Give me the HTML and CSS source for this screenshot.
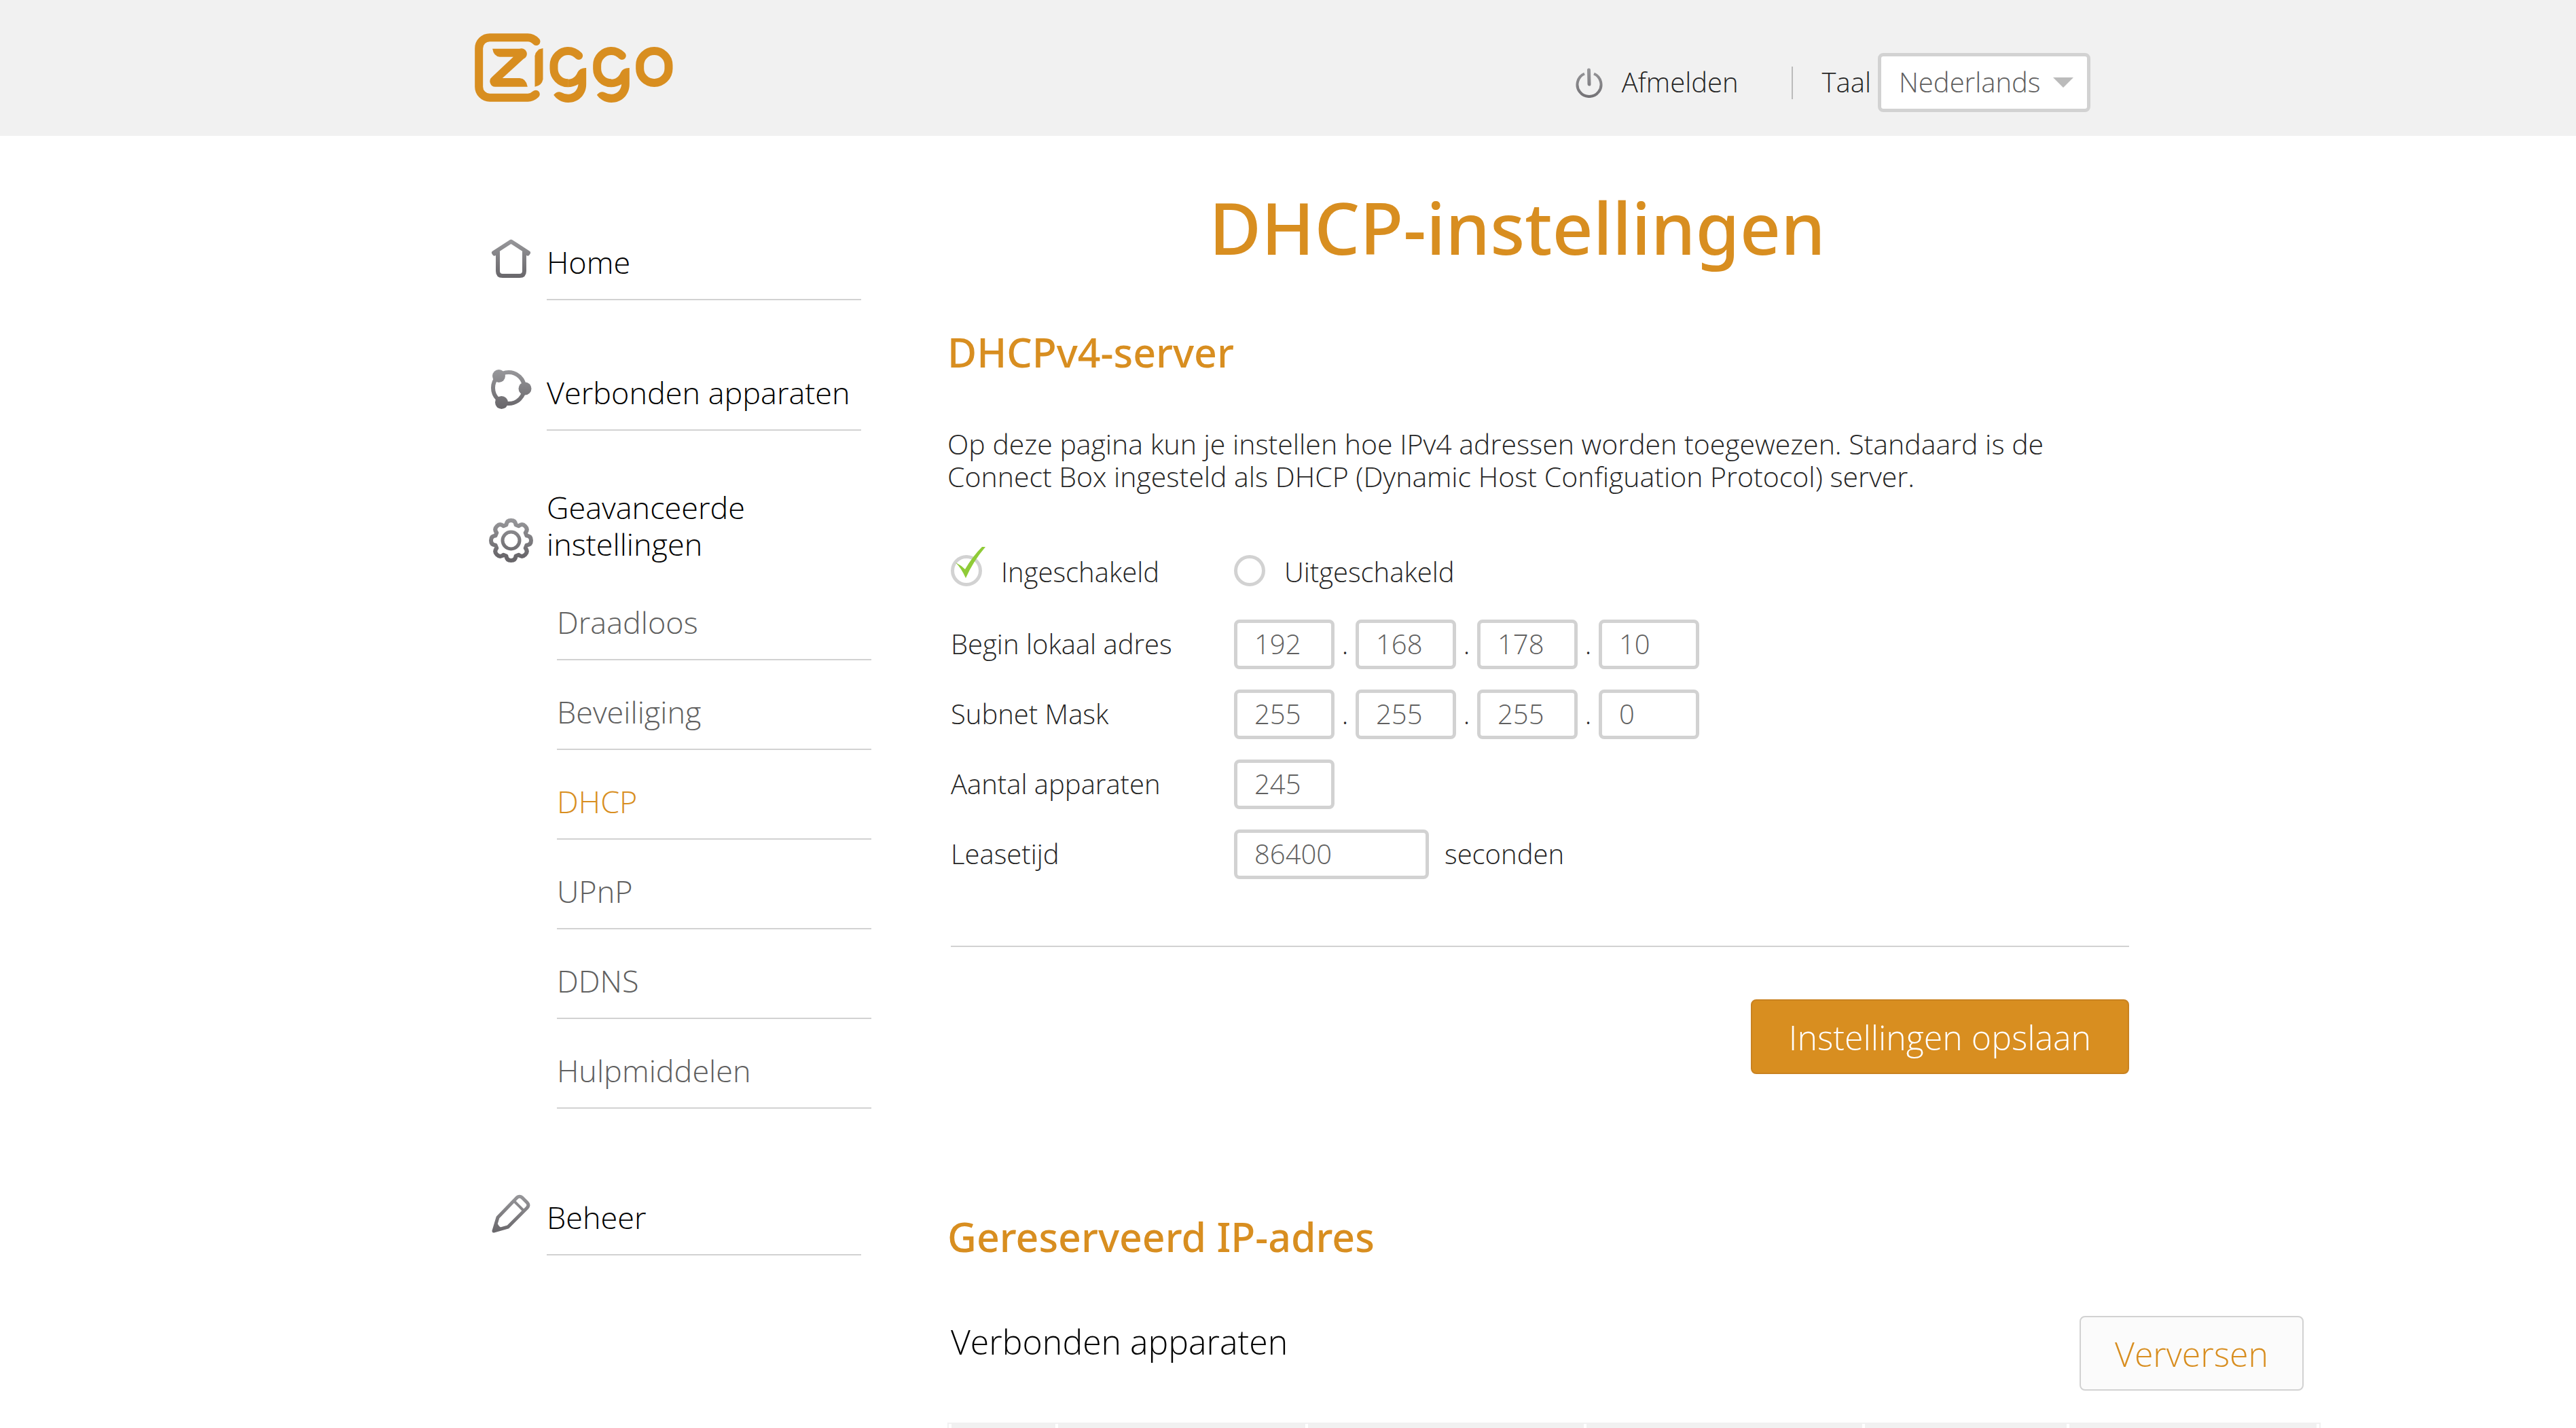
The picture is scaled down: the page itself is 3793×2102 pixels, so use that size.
FILE: index.html
```html
<!DOCTYPE html>
<html lang="nl">
<head>
<meta charset="utf-8">
<meta name="viewport" content="width=device-width, initial-scale=1">
<title>DHCP-instellingen</title>
<link rel="stylesheet" href="styles.css">
</head>
<body>
<header class="header">
  <a class="logo" href="#" aria-label="Ziggo">
    <svg width="292" height="102" viewBox="118 147 875 306" fill="none">
      <g stroke="currentColor" stroke-width="36" stroke-linecap="round">
        <path d="M389 183Q373 165.500 352 165.500H184A48 48 0 0 0 136 213.500V383A48 48 0 0 0 184 431H352Q371 431 387 416"/>
        <path stroke-linecap="butt" d="M530 367A63 63 0 0 1 467 304V288A63 63 0 0 1 530 225"/>
        <path d="M530 225Q556 225 577 246"/>
        <path stroke-linecap="butt" d="M721 367A63 63 0 0 1 658 304V288A63 63 0 0 1 721 225"/>
        <path d="M721 225Q747 225 768 246"/>
        <rect x="847" y="225" width="127" height="141" rx="63"/>
      </g>
      <g fill="currentColor">
        <path d="M196 215H315A24 24 0 0 1 332 261L240 345H316Q345 347 351 383H210A24 24 0 0 1 194 340L288 251H228Q201 248 196 215Z"/>
        <path d="M419 213V350Q414 378 383 383V247Q388 217 419 213Z"/>
        <path id="g-tail" d="M610 300V372C610 420 575 453 530 453C500 453 478 436 466 419Q482 401 500 408Q514 416 530 416C556 416 573 397 575 372Q555 384 529 385V350C548 351 563 340 571 321Q581 299 610 300Z"/>
        <use href="#g-tail" x="191"/>
      </g>
    </svg>
  </a>
  <div class="tools">
    <a class="logout" href="#">
      <svg width="40" height="44" viewBox="0 0 40 44" fill="none" stroke="url(#metal)" stroke-linecap="round">
        <path stroke-width="4" stroke-linecap="butt" d="M13 8.500A17.500 17.500 0 1 0 27 8.500"/>
        <path stroke-width="5" d="M19.500 3L20 24"/>
      </svg>
      <span>Afmelden</span>
    </a>
    <div class="language">
      <label for="language">Taal</label>
      <div class="select">
        <select id="language"><option>Nederlands</option></select>
      </div>
    </div>
  </div>
</header>

<div class="page">
  <nav class="nav">
    <a class="nav-link" href="#">
      <svg class="nav-icon" viewBox="-4 -4 65 65" fill="none" stroke="url(#metal)" stroke-width="6" stroke-linecap="round" stroke-linejoin="round">
        <defs>
          <linearGradient id="metal" gradientUnits="userSpaceOnUse" x1="0" y1="0" x2="0" y2="57">
            <stop offset="0" stop-color="#98989b"/><stop offset="1" stop-color="#68666a"/>
          </linearGradient>
        </defs>
        <path d="M4 21.500L3 20L28.500 3.500L54 20L53 21.500"/>
        <path d="M9 19V47Q9 54 16 54H41Q48 54 48 47V19"/>
      </svg>
      <span class="nav-label">Home</span>
    </a>
    <a class="nav-link" href="#">
      <svg class="nav-icon" viewBox="-3 -4 65 65">
        <circle cx="26" cy="27" r="23" fill="none" stroke="url(#metal)" stroke-width="6"/>
        <g fill="url(#metal)"><circle cx="11.500" cy="9.500" r="9.500"/><circle cx="50" cy="28" r="9.500"/><circle cx="15.500" cy="48.500" r="9.500"/></g>
      </svg>
      <span class="nav-label">Verbonden apparaten</span>
    </a>
    <a class="nav-link nav-link--open" href="#">
      <svg class="nav-icon" viewBox="0 0 65 65" fill="none" stroke="url(#metal)">
        <path stroke-width="6" stroke-linejoin="round" d="M25.500 9.500Q26 3 32.500 3Q39 3 39.500 9.500L43.800 11.300Q48.800 7 53.400 11.600Q58 16.200 53.700 21.200L55.500 25.500Q62 26 62 32.500Q62 39 55.500 39.500L53.700 43.800Q58 48.800 53.400 53.400Q48.800 58 43.800 53.700L39.500 55.500Q39 62 32.500 62Q26 62 25.500 55.500L21.200 53.700Q16.200 58 11.600 53.400Q7 48.800 11.300 43.800L9.500 39.500Q3 39 3 32.500Q3 26 9.500 25.500L11.300 21.200Q7 16.200 11.600 11.600Q16.200 7 21.200 11.300Z"/>
        <circle cx="32.500" cy="32.500" r="12.500" stroke-width="5"/>
      </svg>
      <span class="nav-label">Geavanceerde instellingen</span>
    </a>
    <ul class="subnav">
      <li><a href="#">Draadloos</a></li>
      <li><a href="#">Beveiliging</a></li>
      <li><a class="active" href="#" aria-current="page">DHCP</a></li>
      <li><a href="#">UPnP</a></li>
      <li><a href="#">DDNS</a></li>
      <li><a href="#">Hulpmiddelen</a></li>
    </ul>
    <a class="nav-link" href="#">
      <svg class="nav-icon" viewBox="-4 -4 65 65" fill="none" stroke="url(#metal)" stroke-width="5" stroke-linejoin="round">
        <path d="M3 54L9 34L37 5Q41 1.500 45 5L52 12Q56 16 52 20L24 48Z"/>
        <path stroke-width="4" d="M33 10L47 24"/>
        <path fill="url(#metal)" stroke="none" d="M2 56L7 39Q9 48 18 51Z"/>
      </svg>
      <span class="nav-label">Beheer</span>
    </a>
  </nav>

  <main class="main">
    <h1>DHCP-instellingen</h1>
    <section class="server">
      <h2>DHCPv4-server</h2>
      <p class="intro">Op deze pagina kun je instellen hoe IPv4 adressen worden toegewezen. Standaard is de Connect Box ingesteld als DHCP (Dynamic Host Configuation Protocol) server.</p>
      <form class="form">
        <div class="choices">
          <label class="choice">
            <span class="radio">
              <input type="radio" name="dhcp" checked>
              <svg class="tick" width="52" height="46" viewBox="0 0 52 46" fill="#8fcb37"><path d="M7 23Q15 27 21 33Q32 14 46 0H51Q33 21 22 46Q16 32 7 23Z"/></svg>
            </span>
            <span>Ingeschakeld</span>
          </label>
          <label class="choice">
            <span class="radio"><input type="radio" name="dhcp"></span>
            <span>Uitgeschakeld</span>
          </label>
        </div>
        <div class="field">
          <label for="start">Begin lokaal adres</label>
          <div class="octets">
            <input id="start" type="text" value="192"><span>.</span><input type="text" value="168" aria-label="Begin lokaal adres 2"><span>.</span><input type="text" value="178" aria-label="Begin lokaal adres 3"><span>.</span><input type="text" value="10" aria-label="Begin lokaal adres 4">
          </div>
        </div>
        <div class="field">
          <label for="mask">Subnet Mask</label>
          <div class="octets">
            <input id="mask" type="text" value="255"><span>.</span><input type="text" value="255" aria-label="Subnet Mask 2"><span>.</span><input type="text" value="255" aria-label="Subnet Mask 3"><span>.</span><input type="text" value="0" aria-label="Subnet Mask 4">
          </div>
        </div>
        <div class="field">
          <label for="count">Aantal apparaten</label>
          <input id="count" type="text" value="245">
        </div>
        <div class="field">
          <label for="lease">Leasetijd</label>
          <input id="lease" class="wide" type="text" value="86400">
          <span class="unit">seconden</span>
        </div>
        <div class="actions"><button class="button button--primary" type="submit">Instellingen opslaan</button></div>
      </form>
    </section>

    <section class="reserved">
      <h2>Gereserveerd IP-adres</h2>
      <div class="devices-head">
        <h3>Verbonden apparaten</h3>
        <button class="button button--plain" type="button">Verversen</button>
      </div>
      <table class="devices">
        <colgroup><col class="c-pick"><col class="c-name"><col class="c-wide"><col class="c-wide"><col class="c-speed"><col class="c-name"></colgroup>
        <thead><tr><th></th><th></th><th></th><th></th><th></th><th></th></tr></thead>
      </table>
    </section>
  </main>
</div>
</body>
</html>
```
FILE: styles.css
```css
:root {
  --orange: #d88e20;
  --line: #d2d2d2;
  --gutter: max(24px, calc((100% - 2395px) / 2));
}

* { box-sizing: border-box; }

body {
  margin: 0;
  background: #fff;
  color: #262626;
  font: 300 40px/48px "Open Sans", "Noto Sans", sans-serif;
}

a { color: inherit; text-decoration: none; }
h1, h2, h3, p, ul { margin: 0; padding: 0; }
ul { list-style: none; }
svg { display: block; flex: none; }
input, select, button { margin: 0; font: inherit; }

/* Header */
.header {
  display: flex;
  justify-content: space-between;
  align-items: center;
  height: 200px;
  padding: 0 var(--gutter);
  background: #f1f1f1;
}
.logo { color: var(--orange); }
.tools { display: flex; align-items: center; margin: 43px 16px 0 0; }
.logout { display: flex; align-items: center; gap: 28px; padding-right: 78px; }
.logout span, .language label { padding-bottom: 2px; }
.language {
  display: flex;
  align-items: center;
  gap: 10px;
}
.language::before {
  content: "";
  width: 2px;
  height: 48px;
  margin-right: 33px;
  background: #bbb;
}
.select { position: relative; }
.select select {
  appearance: none;
  width: 313px;
  height: 87px;
  padding: 0 60px 2px 26px;
  border: 5px solid var(--line);
  border-radius: 8px;
  background: #fff;
  color: #606060;
}
.select::after {
  content: "";
  position: absolute;
  top: 36px;
  right: 25px;
  border: solid transparent;
  border-width: 15px 15px 0;
  border-top-color: #bbb;
  pointer-events: none;
}

/* Layout */
.page {
  display: grid;
  grid-template-columns: 696px minmax(0, 2020px);
  padding-left: var(--gutter);
}

/* Side navigation */
.nav { width: 584px; padding: 148px 0 0 21px; font-size: 45px; line-height: 54px; color: #000; }
.nav-link {
  display: flex;
  align-items: flex-end;
  gap: 20px;
  width: 548px;
  margin-bottom: 98px;
}
.nav-icon { width: 65px; height: 65px; margin-bottom: 29px; }
.nav-label { flex: 1; padding-bottom: 27px; border-bottom: 2px solid var(--line); }
.nav-link--open { margin: -12px 0 0; }
.nav-link--open .nav-icon { margin-bottom: 0; }
.nav-link--open .nav-label { padding-right: 100px; padding-bottom: 0; border: 0; }
.subnav { display: grid; gap: 49px; margin: 61px 0 122px 100px; color: #606060; }
.subnav a { display: block; padding-bottom: 27px; border-bottom: 2px solid var(--line); }
.subnav .active { color: var(--orange); }

/* Content */
.main { padding-top: 75px; }
h1, h2 { color: var(--orange); font-family: "Noto Sans", "Open Sans", sans-serif; font-weight: 500; }
h1 { max-width: 1678px; font-size: 105px; line-height: 120px; text-align: center; }
h2 { font-size: 59px; line-height: 80px; }
h3 { color: #000; font-size: 50px; line-height: 76px; font-weight: 300; }
.server { max-width: 1740px; margin-top: 83px; }
.intro { max-width: 1700px; margin: 71px 0 93px; font-size: 41px; }

.form { padding-left: 5px; }
.choices { display: flex; margin-bottom: 46px; }
.choice { display: flex; align-items: center; gap: 28px; width: 417px; }
.radio { position: relative; height: 48px; }
.radio input {
  display: block;
  appearance: none;
  width: 46px;
  height: 46px;
  margin: -1px 0 0;
  border: 5px solid var(--line);
  border-radius: 50%;
}
.tick { position: absolute; left: 0; bottom: 15px; }
.field { display: flex; align-items: center; margin-bottom: 30px; }
.field > label { width: 417px; padding-bottom: 2px; }
.octets { display: flex; align-items: center; }
.octets span { width: 31px; padding-bottom: 2px; text-align: center; }
.field input {
  width: 148px;
  height: 73px;
  padding: 0 0 2px 25px;
  border: 5px solid var(--line);
  border-radius: 8px;
  background: #fff;
  color: #606060;
}
.field .wide { width: 287px; }
.unit { padding: 0 0 2px 23px; }

.actions {
  display: flex;
  justify-content: flex-end;
  margin-top: 98px;
  padding-top: 77px;
  border-top: 2px solid var(--line);
}
.button {
  height: 110px;
  padding: 2px 50px 0;
  border: 2px solid var(--line);
  border-radius: 8px;
  font-size: 50px;
}
.button--primary { padding: 2px 54px 0; border-color: #c98220; background: var(--orange); color: #fff; }
.button--plain { background: #fbfbfb; color: var(--orange); }

.reserved { margin-top: 199px; }
.devices-head { display: flex; justify-content: space-between; margin: 77px 23px 47px 5px; }
.devices {
  width: 100%;
  table-layout: fixed;
  border: solid #f1f1f1;
  border-width: 2px 2px 0;
  border-spacing: 4px 0;
}
.devices th { height: 6px; padding: 0; background: #f1f1f1; }
.c-pick { width: 153px; }
.c-name { width: 364px; }
.c-wide { width: 406px; }
.c-speed { width: 297px; }
```
